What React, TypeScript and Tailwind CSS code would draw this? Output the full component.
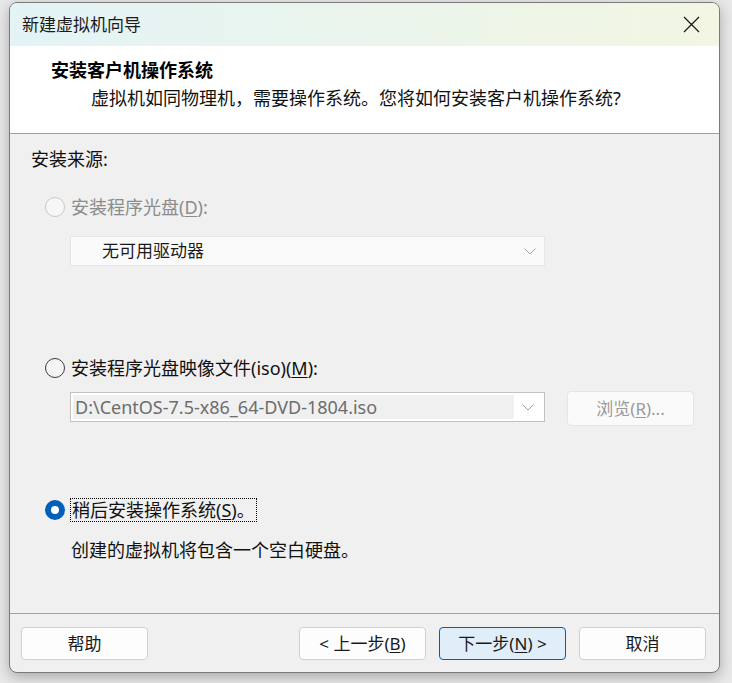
import React from 'react'

const font = "font-['Noto_Sans','Noto_Sans_CJK_SC',sans-serif]"

const Radio = ({ state }: { state: 'disabled' | 'off' | 'on' }) => {
  if (state === 'on') {
    return <span className="w-[20px] h-[20px] rounded-full border-[6px] border-[#005fb8] bg-white shrink-0" />
  }
  if (state === 'disabled') {
    return <span className="w-[20px] h-[20px] rounded-full border border-[#c8c8c8] bg-[#f7f7f7] shrink-0" />
  }
  return <span className="w-[20px] h-[20px] rounded-full border border-[#3c3c3c] bg-[#f4f4f4] shrink-0" />
}

const Chevron = ({ color }: { color: string }) => (
  <svg width="12" height="7" viewBox="0 0 12 7" fill="none">
    <path d="M0.5 0.5 L6 6 L11.5 0.5" stroke={color} strokeWidth="1" />
  </svg>
)

const FooterButton = ({ children, primary }: { children: React.ReactNode; primary?: boolean }) => (
  <button
    className={
      primary
        ? 'w-[127px] h-[33px] rounded-[4px] border border-[#005fb8] bg-[#e0eef9] text-[17px] text-[#1a1a1a] flex items-center justify-center'
        : 'w-[127px] h-[33px] rounded-[4px] border border-[#d0d0d0] bg-[#fdfdfd] text-[17px] text-[#1a1a1a] flex items-center justify-center'
    }
  >
    {children}
  </button>
)

export default function App() {
  return (
    <div className={`w-[732px] h-[683px] bg-[#e9e9e9] overflow-hidden pt-[2px] pl-[9px] ${font}`}>
      <div className="w-[711px] h-[671px] rounded-[8px] border border-[#7a7a7a] bg-[#f0f0f0] overflow-hidden flex flex-col shadow-[0_4px_14px_rgba(0,0,0,0.28)]">
        {/* title bar */}
        <div className="h-[43px] shrink-0 flex items-center justify-between pl-[12px] pr-[19px] bg-linear-to-r from-[#e3f3f6] to-[#f2f6e2]">
          <span className="text-[17px] text-[#1a1a1a]">新建虚拟机向导</span>
          <svg width="17" height="17" viewBox="0 0 17 17">
            <path d="M1 1 L16 16 M16 1 L1 16" stroke="#1a1a1a" strokeWidth="1.3" />
          </svg>
        </div>

        {/* header */}
        <div className="h-[88px] shrink-0 bg-white border-b border-[#a0a0a0] pl-[41px] pt-[12px]">
          <div className="h-[24px] flex items-center text-[18px] font-bold text-black">安装客户机操作系统</div>
          <div className="h-[24px] mt-[4px] pl-[40px] flex items-center text-[18px] text-[#111]">
            虚拟机如同物理机，需要操作系统。您将如何安装客户机操作系统?
          </div>
        </div>

        {/* body */}
        <div className="flex-1 flex flex-col text-[18px] text-[#111]">
          <div className="mt-[13px] h-[24px] pl-[21px] flex items-center">安装来源:</div>

          <div className="mt-[24px] h-[24px] pl-[35px] flex items-center gap-[6px] text-[#8c8c8c]">
            <Radio state="disabled" />
            <span>
              安装程序光盘(<span className="underline underline-offset-2">D</span>):
            </span>
          </div>

          <div className="mt-[17px] ml-[60px] w-[475px] h-[30px] bg-[#fafafa] border border-[#e6e6e6] flex items-center justify-between pl-[31px] pr-[8px]">
            <span className="text-[17px] text-[#1a1a1a]">无可用驱动器</span>
            <Chevron color="#a8a8a8" />
          </div>

          <div className="mt-[90px] h-[24px] pl-[35px] flex items-center gap-[6px]">
            <Radio state="off" />
            <span>
              安装程序光盘映像文件(iso)(<span className="underline underline-offset-2">M</span>):
            </span>
          </div>

          <div className="mt-[11px] h-[35px] pl-[60px] flex items-start">
            <div className="mt-[1px] w-[475px] h-[30px] bg-white border border-[#c2c2c2] flex items-stretch p-[2px]">
              <div className="flex-1 bg-[#f0f0f0] flex items-center pl-[2px] text-[18px] text-[#6d6d6d]">
                D:\CentOS-7.5-x86_64-DVD-1804.iso
              </div>
              <div className="w-[28px] flex items-center justify-center">
                <Chevron color="#a0a0a0" />
              </div>
            </div>
            <div className="ml-[22px] w-[127px] h-[35px] rounded-[4px] bg-[#fafafa] border border-[#e5e5e5] flex items-center justify-center text-[17px] text-[#9a9a9a]">
              浏览(<span className="underline underline-offset-2">R</span>)...
            </div>
          </div>

          <div className="mt-[72px] h-[24px] pl-[35px] flex items-center gap-[5px]">
            <Radio state="on" />
            <span className="h-[24px] px-[1px] flex items-center border border-dotted border-black">
              稍后安装操作系统(<span className="underline underline-offset-2">S</span>)。
            </span>
          </div>

          <div className="mt-[16px] h-[24px] pl-[61px] flex items-center">创建的虚拟机将包含一个空白硬盘。</div>
        </div>

        {/* footer */}
        <div className="h-[59px] shrink-0 border-t border-[#a0a0a0] flex items-start pt-[13px] pl-[11px] pr-[13px]">
          <FooterButton>帮助</FooterButton>
          <div className="flex-1" />
          <div className="flex gap-[13px]">
            <FooterButton>
              &lt; 上一步(<span className="underline underline-offset-2">B</span>)
            </FooterButton>
            <FooterButton primary>
              下一步(<span className="underline underline-offset-2">N</span>) &gt;
            </FooterButton>
            <FooterButton>取消</FooterButton>
          </div>
        </div>
      </div>
    </div>
  )
}
